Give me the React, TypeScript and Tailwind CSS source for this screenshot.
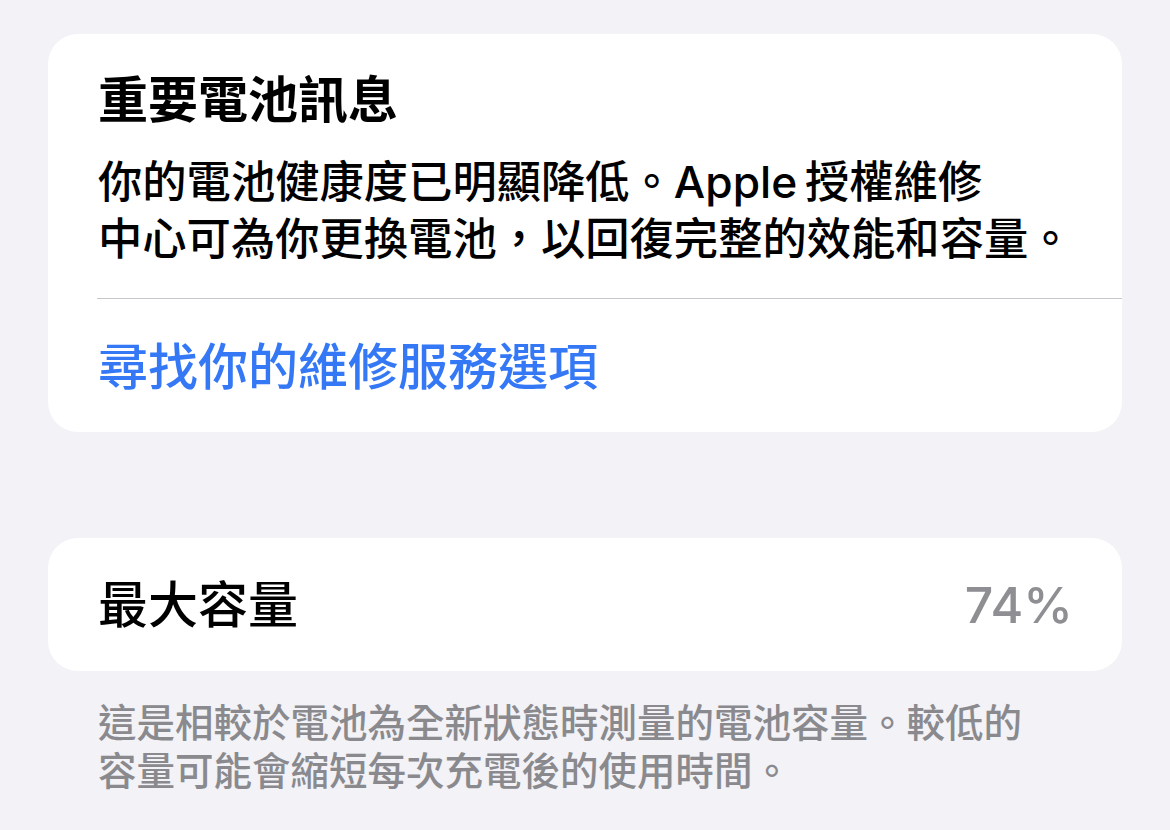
const font = "font-['Inter','Noto_Sans_CJK_TC',sans-serif]";

export default function App() {
  return (
    <div className={`min-h-[830px] w-[1170px] bg-[#f2f2f7] px-[48px] pt-[34px] ${font}`}>
      {/* battery health message */}
      <section className="rounded-[30px] bg-white pt-[36px] pb-[35px]">
        <div className="pl-[50px] pr-[40px]">
          <h2 className="text-[50px] font-bold leading-[60px] text-black">重要電池訊息</h2>
          <p className="mt-[24px] text-[44.3px] font-medium leading-[57px] text-black">
            你的電池健康度已明顯降低。Apple{"\u2009"}授權維修
            <br />
            中心可為你更換電池，以回復完整的效能和容量。
          </p>
        </div>
        <div className="ml-[49px] mt-[30px] h-px bg-[#c8c8cc]" />
        <div className="mt-[38px] pl-[50px]">
          <span className="text-[50px] font-medium leading-[60px] text-[#3478f6]">尋找你的維修服務選項</span>
        </div>
      </section>

      {/* max capacity */}
      <section className="mt-[106px] flex h-[133px] items-center justify-between rounded-[30px] bg-white pl-[50px] pr-[49px]">
        <span className="text-[50px] font-medium leading-[60px] text-black">最大容量</span>
        <span className="text-[50px] font-medium leading-[60px] text-[#8e8e93]">74%</span>
      </section>

      <p className="mt-[28px] px-[50px] text-[38.5px] font-medium leading-[48px] text-[#8a8a8e]">
        這是相較於電池為全新狀態時測量的電池容量。較低的
        <br />
        容量可能會縮短每次充電後的使用時間。
      </p>
    </div>
  );
}
